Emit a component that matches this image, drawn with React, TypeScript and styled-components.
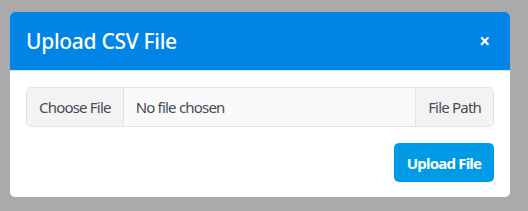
import styled, { createGlobalStyle } from "styled-components";

const GlobalStyle = createGlobalStyle`
  html, body {
    margin: 0;
    padding: 0;
    background: #aaaaaa;
    font-family: "Noto Sans", "Open Sans", sans-serif;
  }
`;

const Backdrop = styled.div`
  width: 528px;
  height: 211px;
  padding: 12px 0 0 10px;
  box-sizing: border-box;
`;

const Modal = styled.div`
  width: 500px;
  background: #ffffff;
  border-radius: 5px;
  overflow: hidden;
`;

const Header = styled.div`
  height: 58px;
  background: #0084e6;
  border-bottom: 1px solid #dee2e6;
  display: flex;
  align-items: center;
  justify-content: space-between;
  padding: 0 20px 0 16px;
`;

const Title = styled.h2`
  margin: 0;
  color: #ffffff;
  font-size: 21px;
  font-weight: 500;
  letter-spacing: -0.3px;
`;

const Close = styled.button`
  border: 0;
  background: none;
  color: #ffffff;
  font-size: 19px;
  font-weight: 700;
  line-height: 1;
  padding: 0;
  cursor: pointer;
  font-family: inherit;
`;

const Body = styled.div`
  padding: 16px 16px 15px;
  display: flex;
  flex-direction: column;
  gap: 16px;
`;

const InputGroup = styled.div`
  display: flex;
  height: 40px;
  border: 1px solid #e3e3e3;
  border-radius: 5px;
  box-sizing: border-box;
  background: #f9f9f9;
  overflow: hidden;
  font-size: 15px;
  letter-spacing: -0.8px;
  color: #454d57;
`;

const Segment = styled.div<{ $addon?: boolean; $grow?: boolean }>`
  display: flex;
  align-items: center;
  padding: 0 12px;
  background: ${(p) => (p.$addon ? "#f3f3f3" : "transparent")};
  flex: ${(p) => (p.$grow ? 1 : "none")};
  border-right: ${(p) => (p.$addon ? "1px solid #e3e3e3" : "none")};
`;

const Suffix = styled(Segment)`
  border-right: none;
  border-left: 1px solid #e3e3e3;
`;

const Footer = styled.div`
  display: flex;
  justify-content: flex-end;
`;

const Button = styled.button`
  width: 100px;
  height: 39px;
  border: 0;
  border-radius: 5px;
  background: #009be6;
  color: #ffffff;
  font-family: inherit;
  font-size: 15px;
  font-weight: 700;
  letter-spacing: -0.8px;
  cursor: pointer;
`;

export default function App() {
  return (
    <>
      <GlobalStyle />
      <Backdrop>
        <Modal>
          <Header>
            <Title>Upload CSV File</Title>
            <Close aria-label="Close">×</Close>
          </Header>
          <Body>
            <InputGroup>
              <Segment $addon>Choose File</Segment>
              <Segment $grow>No file chosen</Segment>
              <Suffix $addon>File Path</Suffix>
            </InputGroup>
            <Footer>
              <Button>Upload File</Button>
            </Footer>
          </Body>
        </Modal>
      </Backdrop>
    </>
  );
}
